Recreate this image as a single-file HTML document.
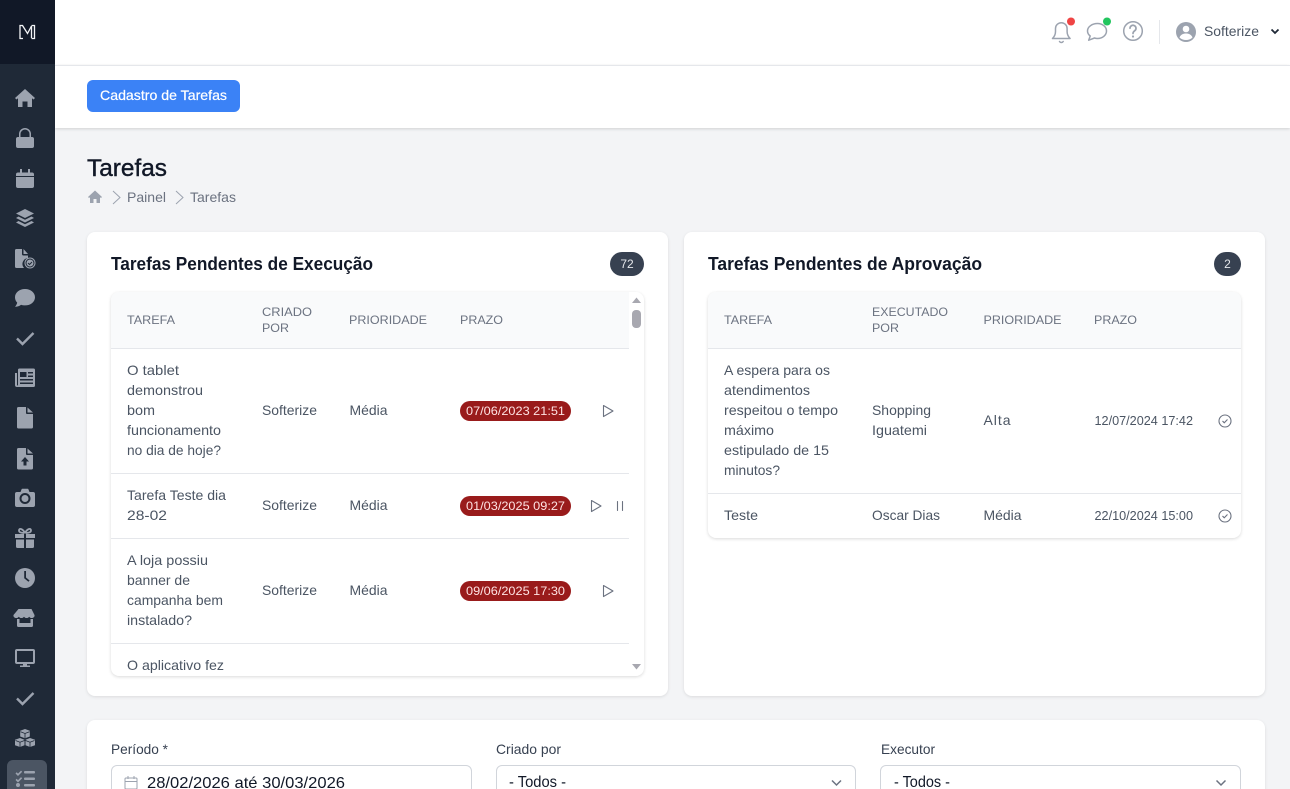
<!DOCTYPE html>
<html lang="pt-BR"><head><meta charset="utf-8"><title>Tarefas</title>
<style>
html,body{margin:0;padding:0;width:1290px;height:789px;overflow:hidden;background:#f3f4f6;font-family:"Liberation Sans",sans-serif}
#w{position:relative;width:1290px;height:789px;overflow:hidden;background:#f3f4f6}
.b{position:absolute;box-sizing:border-box}
svg{position:absolute;left:0;top:0}
text{font-family:"Liberation Sans",sans-serif;font-size:14px;fill:#4b5563}
.h{font-size:12px;fill:#6b7280}
.t{font-size:18px;font-weight:700;fill:#111827}
.p{font-size:12px;fill:#fee2e2}
.d{font-size:12.5px;fill:#4b5563}
.c{font-size:12px;fill:#e5e7eb;text-anchor:middle}
.l{font-size:14px;fill:#374151}
.v{font-size:16px;fill:#111827}
.g{fill:#6b7280}
.i{fill:#9ca3af}
.s{fill:none;stroke:#6b7280;stroke-width:1.1;stroke-linejoin:round;stroke-linecap:round}
</style></head><body><div id="w">
<div class="b" style="left:0;top:0;width:55px;height:789px;background:#1f2937"></div>
<div class="b" style="left:0;top:0;width:55px;height:64px;background:#111827"></div>
<div class="b" style="left:7px;top:760px;width:40px;height:40px;border-radius:6px;background:#4b5563"></div>
<div class="b" style="left:55px;top:0;width:1235px;height:65px;background:#fff"></div>
<div class="b" style="left:55px;top:65px;width:1235px;height:63px;background:#fff;border-top:1px solid #e5e7eb;box-shadow:0 1px 3px rgba(0,0,0,.15)"></div>
<div class="b" style="left:87px;top:80px;width:153px;height:32px;background:#3b82f6;border-radius:6px"></div>
<div class="b" style="left:87px;top:232px;width:581px;height:464px;background:#fff;border-radius:8px;box-shadow:0 1px 3px rgba(0,0,0,.1)"></div>
<div class="b" style="left:684px;top:232px;width:581px;height:464px;background:#fff;border-radius:8px;box-shadow:0 1px 3px rgba(0,0,0,.1)"></div>
<div class="b" style="left:87px;top:720px;width:1178px;height:100px;background:#fff;border-radius:8px;box-shadow:0 1px 3px rgba(0,0,0,.1)"></div>
<div class="b" style="left:111px;top:292px;width:533px;height:384px;background:#fff;border-radius:8px;box-shadow:0 1px 3px rgba(0,0,0,.15)"></div>
<div class="b" style="left:111px;top:292px;width:518px;height:57px;background:#f9fafb;border-bottom:1px solid #e5e7eb;border-top-left-radius:8px"></div>
<div class="b" style="left:111px;top:473px;width:518px;height:1px;background:#e5e7eb"></div>
<div class="b" style="left:111px;top:538px;width:518px;height:1px;background:#e5e7eb"></div>
<div class="b" style="left:111px;top:643px;width:518px;height:1px;background:#e5e7eb"></div>
<div class="b" style="left:632px;top:310px;width:9px;height:18px;background:#a8a8b0;border-radius:4px"></div>
<div class="b" style="left:708px;top:292px;width:533px;height:246px;background:#fff;border-radius:8px;box-shadow:0 1px 3px rgba(0,0,0,.15)"></div>
<div class="b" style="left:708px;top:292px;width:533px;height:57px;background:#f9fafb;border-bottom:1px solid #e5e7eb;border-radius:8px 8px 0 0"></div>
<div class="b" style="left:708px;top:493px;width:533px;height:1px;background:#e5e7eb"></div>
<div class="b" style="left:610px;top:252px;width:34px;height:24px;background:#374151;border-radius:12px"></div>
<div class="b" style="left:1214px;top:252px;width:27px;height:24px;background:#374151;border-radius:12px"></div>
<div class="b" style="left:460px;top:401px;width:111px;height:20px;background:#991b1b;border-radius:10px"></div>
<div class="b" style="left:460px;top:496px;width:111px;height:20px;background:#991b1b;border-radius:10px"></div>
<div class="b" style="left:460px;top:581px;width:111px;height:20px;background:#991b1b;border-radius:10px"></div>
<div class="b" style="left:111px;top:765px;width:361px;height:60px;border:1px solid #d1d5db;border-radius:6px;background:#fff"></div>
<div class="b" style="left:496px;top:765px;width:360px;height:60px;border:1px solid #d1d5db;border-radius:6px;background:#fff"></div>
<div class="b" style="left:880px;top:765px;width:361px;height:60px;border:1px solid #d1d5db;border-radius:6px;background:#fff"></div>
<div class="b" style="left:1159px;top:20px;width:1px;height:24px;background:#e5e7eb"></div>

<svg width="1290" height="789" viewBox="0 0 1290 789">
<!-- logo -->
<g fill="none" stroke="#f3f4f6" stroke-width="1.300"><path d="M23 25.500H20V38.500H23"/><path d="M31.500 25.500H34.500V38.500H31.500"/><path d="M22.500 25.500L27.500 33.500L31.500 26"/><path d="M31.500 26V38"/></g>
<!-- sidebar icons -->
<g class="i">
<path d="M15 98L25 89L35 98L33.500 99.500L32 98.300V107H27.500V101.500H22.500V107H18V98.300L16.500 99.500Z"/>
<path d="M18 137a2 2 0 0 0-2 2v7a2 2 0 0 0 2 2h14a2 2 0 0 0 2-2v-7a2 2 0 0 0-2-2h-1v-3a6 6 0 0 0-12 0v3zm2.500 0v-3a4.500 4.500 0 0 1 9 0v3z"/>
<path d="M16 174.500a2 2 0 0 1 2-2h2v-3.500h2v3.500h6v-3.500h2v3.500h2a2 2 0 0 1 2 2v1.500H16zM16 177h18v9a2 2 0 0 1-2 2H18a2 2 0 0 1-2-2z"/>
<path d="M25 209L34 213.500L25 218L16 213.500Z"/><path d="M18.500 216.500L25 219.800L31.500 216.500L34 218L25 222.500L16 218Z"/><path d="M18.500 221L25 224.300L31.500 221L34 222.500L25 227L16 222.500Z"/>
<path d="M15 250.500a1.500 1.500 0 0 1 1.500-1.500H22v5a1.500 1.500 0 0 0 1.500 1.500H28v2.500a6 6 0 0 0-4 10H16.500a1.500 1.500 0 0 1-1.500-1.500zM23.500 249L28 254H23.500z"/><circle cx="30" cy="263" r="5.500"/>
<path d="M25 289c5.600 0 10 3.600 10 8.200s-4.400 8.200-10 8.200c-1.400 0-2.700-.2-3.900-.7-1.500 1.200-3.600 2-6.100 2 1.200-1.300 2-2.900 2.200-4.100-1.400-1.400-2.200-3.300-2.200-5.400 0-4.600 4.400-8.200 10-8.200z"/>
<path d="M17 338.500L22.500 344L33.500 333" fill="none" stroke="#9ca3af" stroke-width="2.400"/>
<path d="M18 369.500a1.500 1.500 0 0 1 1.500-1h14a1.500 1.500 0 0 1 1.500 1.500v15.500a1.500 1.500 0 0 1-1.500 1.500H17a2 2 0 0 1-2-2V373h2v12a.5.500 0 0 0 1 0z"/>
<path d="M17 408.500a1.500 1.500 0 0 1 1.500-1.500H26v6a1 1 0 0 0 1 1h6v13a1.500 1.500 0 0 1-1.500 1.500h-13a1.500 1.500 0 0 1-1.500-1.500zM27.500 407.500L33 412.500H27.500z"/>
<path d="M17 449.500a1.500 1.500 0 0 1 1.500-1.500H26v6a1 1 0 0 0 1 1h6v13a1.500 1.500 0 0 1-1.500 1.500h-13a1.500 1.500 0 0 1-1.500-1.500zM27.500 448.500L33 453.500H27.500z"/>
<path d="M17 492h3.500l1-2.500a1 1 0 0 1 1-.7h5a1 1 0 0 1 1 .7l1 2.500H33a2 2 0 0 1 2 2v11a2 2 0 0 1-2 2H17a2 2 0 0 1-2-2v-11a2 2 0 0 1 2-2z"/>
<path d="M15 534h9v4h-9zM26 534h9v4h-9zM16 539.500h8v8.500h-6.500a1.500 1.500 0 0 1-1.500-1.500zM26 539.500h8v7a1.500 1.500 0 0 1-1.500 1.500H26z"/>
<path d="M25 533c-2-4-6-5.500-6-2.500 0 1.500 1.500 2.500 6 2.500s6-1 6-2.500c0-3-4-1.500-6 2.500z" fill="none" stroke="#9ca3af" stroke-width="1.800"/>
<circle cx="25" cy="578" r="10"/>
<path d="M18.500 609h13l3 6c.4 1.700-1 3-2.700 3-1.100 0-2-.5-2.600-1.300-.6.800-1.600 1.300-2.600 1.300s-2-.5-2.600-1.300c-.6.800-1.600 1.300-2.600 1.300s-2-.5-2.600-1.300c-.6.800-1.500 1.300-2.600 1.300-1.700 0-3.100-1.300-2.700-3z"/>
<path d="M17 619h2.500v4h11v-4H33v6.500a1.500 1.500 0 0 1-1.500 1.500h-13a1.500 1.500 0 0 1-1.500-1.500z"/>
<path d="M17 649h16a2 2 0 0 1 2 2v11a2 2 0 0 1-2 2h-6v1.500h3v1.500H20v-1.500h3V664h-6a2 2 0 0 1-2-2v-11a2 2 0 0 1 2-2zm0 2v11h16v-11z" fill-rule="evenodd"/>
<path d="M17 698.500L22.500 704L33.500 693" fill="none" stroke="#9ca3af" stroke-width="2.400"/>
<path d="M25 729l4.800 1.800v5.700L25 738.300l-4.800-1.800v-5.700zM20 738l4.500 1.700v5.500L20 747l-5-1.800v-5.500zM30 738l5 1.700v5.500L30 747l-4.500-1.800v-5.500z"/>
<path d="M15.500 773.500l1.200-1.200 1.300 1.300 3-3 1.200 1.200-4.200 4.200zM15.500 780l1.200-1.200 1.300 1.300 3-3 1.200 1.200-4.200 4.200z"/><circle cx="18" cy="785" r="2"/>
<rect x="24" y="771" width="11" height="2.500" rx="1"/><rect x="24" y="777.500" width="11" height="2.500" rx="1"/><rect x="24" y="784" width="11" height="2.500" rx="1"/>
</g>
<!-- icon details on sidebar -->
<g fill="#1f2937">
<circle cx="30" cy="263" r="4" fill="none" stroke="#1f2937" stroke-width="1"/>
<path d="M28 263l1.500 1.500 2.500-2.500" fill="none" stroke="#1f2937" stroke-width="1"/>
<rect x="20" y="372" width="6.500" height="5"/><rect x="28" y="372" width="5" height="1.500"/><rect x="28" y="375.500" width="5" height="1.500"/><rect x="20" y="379" width="13" height="1.500"/><rect x="20" y="382.500" width="13" height="1.500"/>
<path d="M25 457l4 4.500h-2.500v4h-3v-4H21z"/>
<circle cx="25" cy="498.500" r="5.500"/>
<path d="M24.200 571h1.800v6.500l3.600 3-1.200 1.300-4.200-3.500z"/>
<rect x="24" y="533.500" width="2" height="14.500"/>
<rect x="19.500" y="618" width="11" height="4.800"/>
<path d="M20.500 731.800L25 733.500L29.500 731.800M25 733.500V738M15.500 740.500L20 742.200L24.500 740.500M20 742.200V747M25.500 740.500L30 742.200L34.500 740.500M30 742.200V747" fill="none" stroke="#1f2937" stroke-width=".8"/>
</g>
<circle cx="25" cy="498.500" r="3.500" fill="#9ca3af"/>
<!-- top bar icons -->
<g fill="none" stroke="#9ca3af" stroke-width="1.500" stroke-linejoin="round" stroke-linecap="round">
<path d="M1052.500 38.500c1.800-1.800 3-3.500 3-7v-3a5.800 5.800 0 0 1 11.600 0v3c0 3.500 1.200 5.200 3 7z"/><path d="M1059.500 41.500a2.200 2.200 0 0 0 3.700 0"/>
<path d="M1097.500 23.500c5 0 9 3.300 9 7.500s-4 7.500-9 7.500c-1 0-2-.1-3-.5l-5.800 2.200 1.500-4.200c-1.700-1.300-2.700-3-2.700-5 0-4.200 4.600-7.500 10-7.500z"/>
<circle cx="1133" cy="31" r="9.300"/>
<path d="M1130 28.300a3 3 0 1 1 4.800 2.400c-1.100.8-1.800 1.300-1.800 2.800" stroke-width="1.700"/>
</g>
<circle cx="1133" cy="36.500" r="1.100" fill="#9ca3af"/>
<circle cx="1071" cy="21.500" r="4" fill="#ef4444"/>
<circle cx="1107" cy="21.500" r="4" fill="#22c55e"/>
<circle cx="1186" cy="32" r="10" fill="#9ca3af"/>
<circle cx="1186" cy="29" r="3.300" fill="#fff"/>
<path d="M1179.500 37.500c1-2.700 3.500-4 6.500-4s5.500 1.300 6.500 4c-1.700 1.700-4 2.500-6.500 2.500s-4.800-.8-6.500-2.500z" fill="#fff"/>
<path d="M1271.500 29.500l3.500 3.500 3.500-3.500" fill="none" stroke="#1f2937" stroke-width="1.800"/>
<!-- breadcrumb icons -->
<path d="M88 197l7-6.500 7 6.500-1 1-1-.8V203h-3.500v-4h-3v4H90v-5.800l-1 .8z" class="i" fill="#9ca3af"/>
<path d="M113 191l7 6.500-7 6.500M176 191l7 6.500-7 6.500" fill="none" stroke="#9ca3af" stroke-width="1"/>
<!-- scroll arrows -->
<path d="M632 303l4.500-5.500 4.500 5.500z" fill="#a8a8b0"/><path d="M632 664l4.500 5.500 4.500-5.500z" fill="#a8a8b0"/>

<!-- text -->
<text x="1204" y="36" textLength="55" lengthAdjust="spacingAndGlyphs">Softerize</text>
<text x="100" y="100" textLength="127" lengthAdjust="spacingAndGlyphs" style="fill:#fff;stroke:#fff;stroke-width:.2">Cadastro de Tarefas</text>
<text x="87" y="176" textLength="80" lengthAdjust="spacingAndGlyphs" style="font-size:24px;fill:#111827;stroke:#111827;stroke-width:.4">Tarefas</text>
<text x="127" y="202" textLength="39" lengthAdjust="spacingAndGlyphs" class="g">Painel</text>
<text x="190" y="202" textLength="46" lengthAdjust="spacingAndGlyphs" class="g">Tarefas</text>
<text class="t" x="111" y="270" textLength="262" lengthAdjust="spacingAndGlyphs">Tarefas Pendentes de Execução</text>
<text class="t" x="708" y="270" textLength="274" lengthAdjust="spacingAndGlyphs">Tarefas Pendentes de Aprovação</text>
<text class="c" x="627" y="268">72</text>
<text class="c" x="1227.500" y="268">2</text>

<text class="h" x="127" y="324" textLength="48" lengthAdjust="spacingAndGlyphs">TAREFA</text>
<text class="h" x="262" y="316" textLength="50" lengthAdjust="spacingAndGlyphs">CRIADO</text>
<text class="h" x="262" y="332" textLength="27" lengthAdjust="spacingAndGlyphs">POR</text>
<text class="h" x="349" y="324" textLength="78" lengthAdjust="spacingAndGlyphs">PRIORIDADE</text>
<text class="h" x="460" y="324" textLength="43" lengthAdjust="spacingAndGlyphs">PRAZO</text>

<text x="127" y="375" textLength="52" lengthAdjust="spacingAndGlyphs">O tablet</text>
<text x="127" y="395" textLength="76" lengthAdjust="spacingAndGlyphs">demonstrou</text>
<text x="127" y="415" textLength="28" lengthAdjust="spacingAndGlyphs">bom</text>
<text x="127" y="435" textLength="94" lengthAdjust="spacingAndGlyphs">funcionamento</text>
<text x="127" y="455" textLength="94" lengthAdjust="spacingAndGlyphs">no dia de hoje?</text>
<text x="262" y="415" textLength="55" lengthAdjust="spacingAndGlyphs">Softerize</text>
<text x="349.500" y="415" textLength="38" lengthAdjust="spacingAndGlyphs">Média</text>
<text class="p" x="466" y="415" textLength="99" lengthAdjust="spacingAndGlyphs">07/06/2023 21:51</text>

<text x="127" y="500" textLength="99" lengthAdjust="spacingAndGlyphs">Tarefa Teste dia</text>
<text x="127" y="520" textLength="40" lengthAdjust="spacingAndGlyphs">28-02</text>
<text x="262" y="510" textLength="55" lengthAdjust="spacingAndGlyphs">Softerize</text>
<text x="349.500" y="510" textLength="38" lengthAdjust="spacingAndGlyphs">Média</text>
<text class="p" x="466" y="510" textLength="99" lengthAdjust="spacingAndGlyphs">01/03/2025 09:27</text>

<text x="127" y="565" textLength="81" lengthAdjust="spacingAndGlyphs">A loja possiu</text>
<text x="127" y="585" textLength="63" lengthAdjust="spacingAndGlyphs">banner de</text>
<text x="127" y="605" textLength="96" lengthAdjust="spacingAndGlyphs">campanha bem</text>
<text x="127" y="625" textLength="65" lengthAdjust="spacingAndGlyphs">instalado?</text>
<text x="262" y="595" textLength="55" lengthAdjust="spacingAndGlyphs">Softerize</text>
<text x="349.500" y="595" textLength="38" lengthAdjust="spacingAndGlyphs">Média</text>
<text class="p" x="466" y="595" textLength="99" lengthAdjust="spacingAndGlyphs">09/06/2025 17:30</text>

<text x="127" y="670" textLength="97" lengthAdjust="spacingAndGlyphs">O aplicativo fez</text>

<g class="s">
<path d="M603.500 405.500L613 411L603.500 416.500Z"/>
<path d="M591.500 500.500L601 506L591.500 511.500Z"/>
<path d="M603.500 585.500L613 591L603.500 596.500Z"/>
<path d="M617.500 501.500V510.500M622.500 501.500V510.500"/>
</g>

<text class="h" x="724" y="324" textLength="48" lengthAdjust="spacingAndGlyphs">TAREFA</text>
<text class="h" x="872" y="316" textLength="76" lengthAdjust="spacingAndGlyphs">EXECUTADO</text>
<text class="h" x="872" y="332" textLength="27" lengthAdjust="spacingAndGlyphs">POR</text>
<text class="h" x="983.500" y="324" textLength="78" lengthAdjust="spacingAndGlyphs">PRIORIDADE</text>
<text class="h" x="1094" y="324" textLength="43" lengthAdjust="spacingAndGlyphs">PRAZO</text>

<text x="724" y="375" textLength="106" lengthAdjust="spacingAndGlyphs">A espera para os</text>
<text x="724" y="395" textLength="86" lengthAdjust="spacingAndGlyphs">atendimentos</text>
<text x="724" y="415" textLength="114" lengthAdjust="spacingAndGlyphs">respeitou o tempo</text>
<text x="724" y="435" textLength="50" lengthAdjust="spacingAndGlyphs">máximo</text>
<text x="724" y="455" textLength="105" lengthAdjust="spacingAndGlyphs">estipulado de 15</text>
<text x="724" y="475" textLength="56" lengthAdjust="spacingAndGlyphs">minutos?</text>
<text x="872" y="415" textLength="59" lengthAdjust="spacingAndGlyphs">Shopping</text>
<text x="872" y="435" textLength="55" lengthAdjust="spacingAndGlyphs">Iguatemi</text>
<text x="983.500" y="425" textLength="27" lengthAdjust="spacing">Alta</text>
<text class="d" x="1094.500" y="425" textLength="98.500" lengthAdjust="spacingAndGlyphs">12/07/2024 17:42</text>

<text x="724" y="520" textLength="34" lengthAdjust="spacingAndGlyphs">Teste</text>
<text x="872" y="520" textLength="68" lengthAdjust="spacingAndGlyphs">Oscar Dias</text>
<text x="983.500" y="520" textLength="38" lengthAdjust="spacingAndGlyphs">Média</text>
<text class="d" x="1094.500" y="520" textLength="98.500" lengthAdjust="spacingAndGlyphs">22/10/2024 15:00</text>

<g class="s">
<circle cx="1225" cy="421" r="6"/><path d="M1222.800 421.300l1.500 1.500 2.900-3"/>
<circle cx="1225" cy="516" r="6"/><path d="M1222.800 516.300l1.500 1.500 2.900-3"/>
</g>

<text class="l" x="111" y="754" textLength="57" lengthAdjust="spacingAndGlyphs">Período *</text>
<text class="l" x="496" y="754" textLength="65" lengthAdjust="spacingAndGlyphs">Criado por</text>
<text class="l" x="881" y="754" textLength="54" lengthAdjust="spacingAndGlyphs">Executor</text>
<text class="v" x="147" y="788" textLength="198" lengthAdjust="spacingAndGlyphs">28/02/2026 até 30/03/2026</text>
<text class="v" x="509" y="787" textLength="57" lengthAdjust="spacingAndGlyphs">- Todos -</text>
<text class="v" x="894" y="787" textLength="56" lengthAdjust="spacingAndGlyphs">- Todos -</text>
<g fill="none" stroke="#9ca3af" stroke-width="1">
<rect x="125" y="778" width="12" height="11" rx="1"/><path d="M125 781.500H137M128 776V779M134 776V779"/>
</g>
<path d="M832 780.500l4.500 4.500 4.500-4.500M1216.500 780.500l4.500 4.500 4.500-4.500" fill="none" stroke="#6b7280" stroke-width="1.500"/>
</svg>
</div></body></html>
